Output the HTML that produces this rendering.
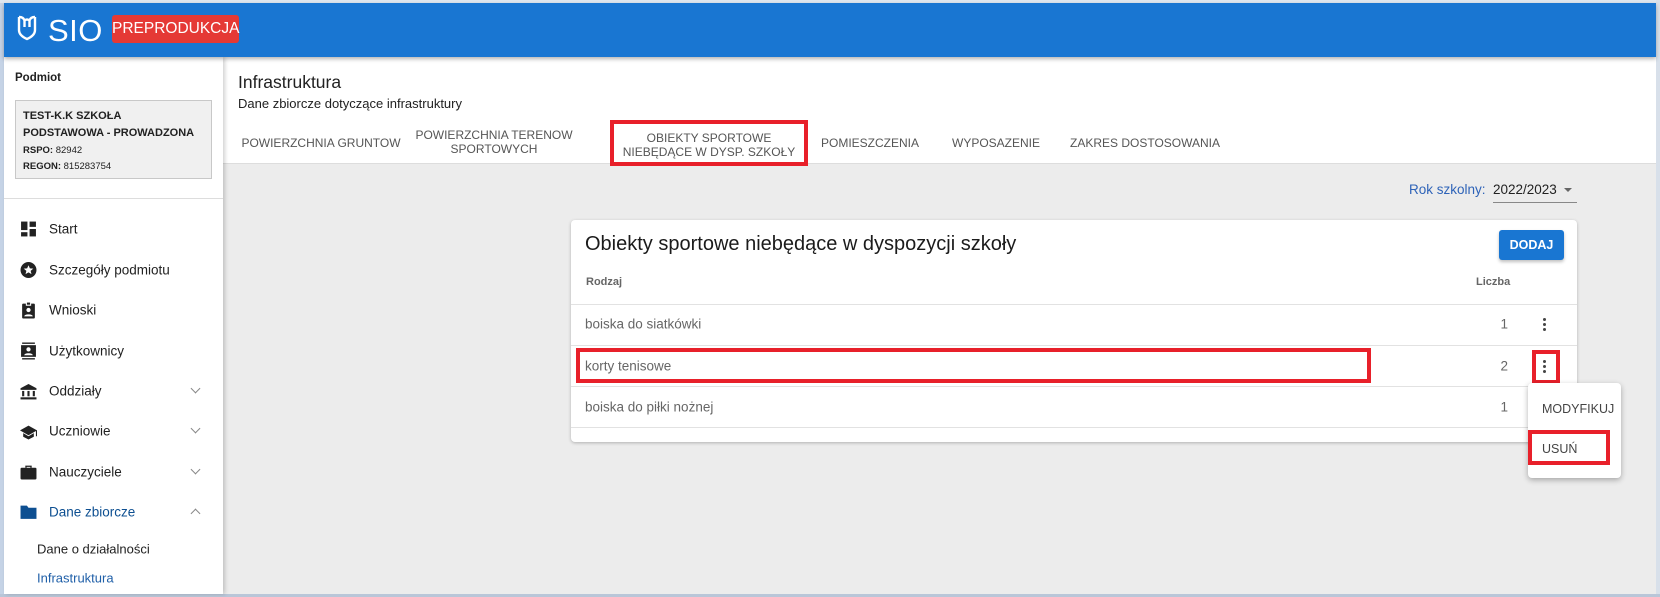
<!DOCTYPE html>
<html><head><meta charset="utf-8">
<style>
*{box-sizing:border-box;margin:0;padding:0}
body{width:1660px;height:597px;overflow:hidden;background:#fff;font-family:"Liberation Sans",Arial,sans-serif;position:relative;color:#212121}
div{white-space:nowrap}
.abs{position:absolute}
#lb{left:0;top:0;width:4px;height:597px;background:#c5d3e6}
#tb{left:0;top:0;width:1660px;height:3px;background:#dfe6ef}
#rb{left:1656px;top:0;width:4px;height:597px;background:#d8e0ea}
#bb{left:0;top:594px;width:1660px;height:3px;background:#b9c6d8}
#hdr{left:4px;top:3px;width:1652px;height:54px;background:#1976d2;box-shadow:0 2px 4px rgba(0,0,0,.3);z-index:3}
#sio{left:44px;top:10px;color:#fff;font-size:31px;letter-spacing:0.5px;font-weight:normal}
#badge{height:28px;background:#e53935;border-radius:3px;color:#fff;font-size:15.5px;line-height:28px;text-align:center}
#side{left:4px;top:57px;width:219px;height:537px;background:#fff;box-shadow:2px 0 4px rgba(0,0,0,.18);z-index:2}
#main{left:223px;top:57px;width:1433px;height:537px;background:#ececec}
#mh{left:223px;top:57px;width:1433px;height:107px;background:#fff;border-bottom:1px solid #ddd}
.t{position:absolute;white-space:nowrap}
.tab{position:absolute;font-size:12px;color:#555;text-align:center;line-height:14px;transform:translateX(-50%)}
.mi{position:absolute;left:49px;font-size:13.5px;color:#212121;transform:translateY(-50%)}
.ic{position:absolute;left:20px;width:17px;height:17px;transform:translateY(-50%)}
.chev{position:absolute;left:192px;width:7px;height:7px;border-right:1px solid #888;border-bottom:1px solid #888;transform:rotate(45deg)}
.rowt{position:absolute;left:585px;font-size:13.5px;color:#666;transform:translateY(-50%)}
.num{position:absolute;left:1450px;width:58px;text-align:right;font-size:13.5px;color:#666;transform:translateY(-50%)}
.hl{position:absolute;left:571px;width:1006px;height:1px;background:#e2e2e2}
.dots{position:absolute;left:1543px;width:3px}
.dots i{display:block;width:3px;height:3px;border-radius:50%;background:#444;margin-bottom:2px}
.red{position:absolute;border:4px solid #e8202a}
</style></head><body>
<div id="lb" class="abs"></div><div id="tb" class="abs"></div><div id="rb" class="abs"></div><div id="bb" class="abs"></div>
<div id="hdr" class="abs">
<svg class="abs" style="left:13px;top:12px" width="20" height="26" viewBox="0 0 20 26"><path d="M2 2 V15 Q2 20.5 10 24 Q18 20.5 18 15 V2 M2 2 Q6.5 2 7.5 5.5 V12 M18 2 Q13.5 2 12.5 5.5 V12 M7.5 5.5 Q10 3.5 12.5 5.5" fill="none" stroke="#fff" stroke-width="2.4"/></svg>
<div id="sio" class="abs">SIO</div>
<div id="badge" class="abs" style="left:108px;top:12px;width:127px">PREPRODUKCJA</div>
</div>
<div id="main" class="abs"></div>
<div id="mh" class="abs"></div>
<div id="side" class="abs"></div>
<div style="position:absolute;left:0;top:0;z-index:4">
<div class="t" style="left:15px;top:72px;font-size:11.5px;font-weight:bold">Podmiot</div>
<div class="abs" style="left:15px;top:100px;width:197px;height:79px;background:#f0f0f0;border:1px solid #c8c8c8"></div>
<div class="t" style="left:23px;top:108px;font-size:11px;font-weight:bold;line-height:17px">TEST-K.K SZKOŁA<br>PODSTAWOWA - PROWADZONA</div>
<div class="t" style="left:23px;top:143px;font-size:9.5px;line-height:16px"><b>RSPO:</b> 82942<br><b>REGON:</b> 815283754</div>
<div class="abs" style="left:4px;top:198px;width:219px;height:1px;background:#ddd"></div>
<svg class="ic" style="top:229px" viewBox="0 0 16 16"><rect x="1" y="1" width="6" height="8" fill="#222"/><rect x="9" y="1" width="6" height="5" fill="#222"/><rect x="1" y="11" width="6" height="4" fill="#222"/><rect x="9" y="8" width="6" height="7" fill="#222"/></svg>
<div class="mi" style="top:229px">Start</div>
<svg class="ic" style="top:270px" viewBox="0 0 16 16"><circle cx="8" cy="8" r="7.5" fill="#222"/><path d="M8 3.5l1.3 3 3.2.2-2.5 2.1.8 3.1L8 10.2 5.2 11.9l.8-3.1L3.5 6.7l3.2-.2z" fill="#fff"/></svg>
<div class="mi" style="top:270px">Szczegóły podmiotu</div>
<svg class="ic" style="top:310px" viewBox="0 0 16 16"><rect x="2" y="2" width="12" height="14" rx="1" fill="#222"/><rect x="6" y="0.5" width="4" height="3" fill="#222" stroke="#fff" stroke-width="1"/><circle cx="8" cy="8" r="2" fill="#fff"/><path d="M4 14c0-2.5 8-2.5 8 0z" fill="#fff"/></svg>
<div class="mi" style="top:310px">Wnioski</div>
<svg class="ic" style="top:351px" viewBox="0 0 16 16"><rect x="2" y="0" width="12" height="1.3" fill="#222"/><rect x="2" y="14.7" width="12" height="1.3" fill="#222"/><rect x="1" y="2.5" width="14" height="11" fill="#222"/><circle cx="8" cy="6.5" r="2" fill="#fff"/><path d="M4 12c0-2.5 8-2.5 8 0z" fill="#fff"/></svg>
<div class="mi" style="top:351px">Użytkownicy</div>
<svg class="ic" style="top:392px" viewBox="0 0 16 16"><path d="M8 0.5L0.5 4.5V6h15V4.5z" fill="#222"/><rect x="2" y="7" width="2" height="5" fill="#222"/><rect x="7" y="7" width="2" height="5" fill="#222"/><rect x="12" y="7" width="2" height="5" fill="#222"/><rect x="0.5" y="13" width="15" height="2" fill="#222"/></svg>
<div class="mi" style="top:391px">Oddziały</div><div class="chev" style="top:385px"></div>
<svg class="ic" style="top:432px" viewBox="0 0 16 16"><path d="M8 2L0 6.5 8 11l7-4v5h1V6.5z" fill="#222"/><path d="M3 9v3.5L8 15l5-2.5V9L8 12z" fill="#222"/></svg>
<div class="mi" style="top:431px">Uczniowie</div><div class="chev" style="top:425px"></div>
<svg class="ic" style="top:472px" viewBox="0 0 16 16"><path d="M5 4V2h6v2h-1.3V3.2H6.3V4z" fill="#222"/><rect x="0.5" y="4" width="15" height="11" rx="1" fill="#222"/></svg>
<div class="mi" style="top:472px">Nauczyciele</div><div class="chev" style="top:466px"></div>
<svg class="ic" style="top:512px" viewBox="0 0 16 16"><path d="M0.5 2h6l1.5 2h7.5v10.5H0.5z" fill="#0d4f91"/></svg>
<div class="mi" style="top:512px;color:#0d4f91">Dane zbiorcze</div><div class="chev" style="top:510px;transform:rotate(-135deg)"></div>
<div class="mi" style="left:37px;top:549px;font-size:13px">Dane o działalności</div>
<div class="mi" style="left:37px;top:578px;font-size:13px;color:#1f5fa8">Infrastruktura</div>
</div>
<div class="t" style="left:238px;top:72px;font-size:17.5px">Infrastruktura</div>
<div class="t" style="left:238px;top:96px;font-size:13px">Dane zbiorcze dotyczące infrastruktury</div>
<div class="tab" style="left:321px;top:136px">POWIERZCHNIA GRUNTOW</div>
<div class="tab" style="left:494px;top:128px">POWIERZCHNIA TERENOW<br>SPORTOWYCH</div>
<div class="tab" style="left:709px;top:131px">OBIEKTY SPORTOWE<br>NIEBĘDĄCE W DYSP. SZKOŁY</div>
<div class="tab" style="left:870px;top:136px">POMIESZCZENIA</div>
<div class="tab" style="left:996px;top:136px">WYPOSAZENIE</div>
<div class="tab" style="left:1145px;top:136px">ZAKRES DOSTOSOWANIA</div>
<div class="red" style="left:610px;top:120px;width:198px;height:46px"></div>
<div class="t" style="left:1409px;top:182px;font-size:13.5px;color:#2e63b8">Rok szkolny:</div>
<div class="t" style="left:1493px;top:182px;font-size:13.5px;color:#222">2022/2023</div>
<div class="abs" style="left:1564px;top:188px;width:0;height:0;border-left:4px solid transparent;border-right:4px solid transparent;border-top:4px solid #666"></div>
<div class="abs" style="left:1493px;top:202px;width:84px;height:1px;background:#888"></div>
<div class="abs" style="left:571px;top:220px;width:1006px;height:222px;background:#fff;border-radius:4px;box-shadow:0 1px 3px rgba(0,0,0,.25)"></div>
<div class="t" style="left:585px;top:233px;font-size:20px;color:#1b1b1b">Obiekty sportowe niebędące w dyspozycji szkoły</div>
<div class="abs" style="left:1499px;top:230px;width:65px;height:30px;background:#1976d2;border-radius:3px;box-shadow:0 2px 3px rgba(0,0,0,.25);color:#fff;font-size:12.5px;font-weight:bold;line-height:30px;text-align:center">DODAJ</div>
<div class="t" style="left:586px;top:276px;font-size:11px;font-weight:bold;color:#666">Rodzaj</div>
<div class="t" style="left:1476px;top:276px;font-size:11px;font-weight:bold;color:#666">Liczba</div>
<div class="hl" style="top:304px"></div>
<div class="rowt" style="top:324px">boiska do siatkówki</div><div class="num" style="top:324px">1</div>
<div class="dots" style="top:318px"><i></i><i></i><i></i></div>
<div class="hl" style="top:345px"></div>
<div class="rowt" style="top:366px">korty tenisowe</div><div class="num" style="top:366px">2</div>
<div class="dots" style="top:360px"><i></i><i></i><i></i></div>
<div class="hl" style="top:386px"></div>
<div class="rowt" style="top:407px">boiska do piłki nożnej</div><div class="num" style="top:407px">1</div>
<div class="hl" style="top:427px"></div>
<div class="red" style="left:576px;top:348px;width:795px;height:35px"></div>
<div class="red" style="left:1532px;top:350px;width:28px;height:34px"></div>
<div class="abs" style="left:1528px;top:383px;width:93px;height:95px;background:#fff;border-radius:4px;box-shadow:0 2px 6px rgba(0,0,0,.3)"></div>
<div class="t" style="left:1542px;top:402px;font-size:12.5px;color:#444">MODYFIKUJ</div>
<div class="t" style="left:1542px;top:442px;font-size:12.5px;color:#444">USUŃ</div>
<div class="red" style="left:1528px;top:430px;width:82px;height:35px"></div>
</body></html>
